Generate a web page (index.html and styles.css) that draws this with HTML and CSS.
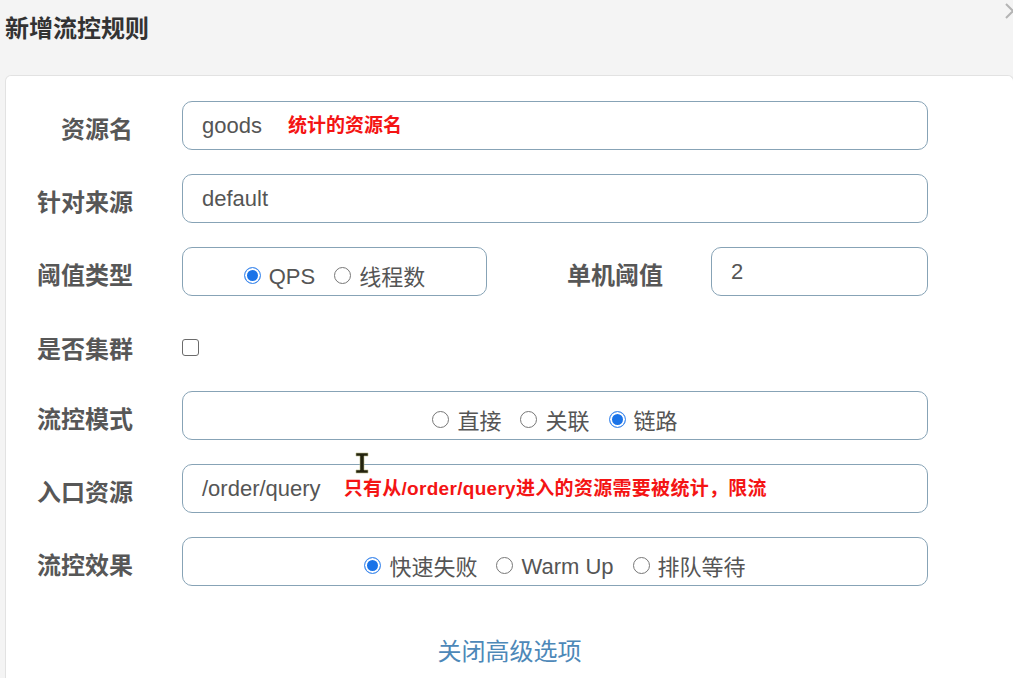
FILE: index.html
```html
<!DOCTYPE html>
<html lang="zh-CN">
<head>
<meta charset="utf-8">
<title>新增流控规则</title>
<link rel="stylesheet" href="styles.css">
</head>
<body>
<header class="modal-head">
  <h1 class="title">新增流控规则</h1>
  <svg class="close" width="16" height="16" viewBox="0 0 16 16"><path d="M1 1 L15 15 M15 1 L1 15" stroke="#b4b4b4" stroke-width="2" fill="none"/></svg>
</header>
<section class="card">
  <form class="form">
    <div class="row">
      <label class="label">资源名</label>
      <div class="field"><span class="val">goods</span><span class="note">统计的资源名</span></div>
    </div>
    <div class="row">
      <label class="label">针对来源</label>
      <div class="field"><span class="val">default</span></div>
    </div>
    <div class="row">
      <label class="label">阈值类型</label>
      <div class="field radio-box narrow">
        <span class="opt"><span class="radio on"></span><span class="lat">QPS</span></span>
        <span class="opt"><span class="radio"></span>线程数</span>
      </div>
      <label class="label label2">单机阈值</label>
      <div class="field num"><span class="val">2</span></div>
    </div>
    <div class="row row-check">
      <label class="label">是否集群</label>
      <span class="check"></span>
    </div>
    <div class="row">
      <label class="label">流控模式</label>
      <div class="field radio-box">
        <span class="opt"><span class="radio"></span>直接</span>
        <span class="opt"><span class="radio"></span>关联</span>
        <span class="opt"><span class="radio on"></span>链路</span>
      </div>
    </div>
    <div class="row">
      <label class="label">入口资源</label>
      <div class="field"><span class="val">/order/query</span><span class="note note-long">只有从/order/query进入的资源需要被统计，限流</span></div>
    </div>
    <div class="row">
      <label class="label">流控效果</label>
      <div class="field radio-box">
        <span class="opt"><span class="radio on"></span>快速失败</span>
        <span class="opt"><span class="radio"></span><span class="lat">Warm Up</span></span>
        <span class="opt"><span class="radio"></span>排队等待</span>
      </div>
    </div>
  </form>
  <a class="toggle">关闭高级选项</a>
  <svg class="cursor" width="14" height="22" viewBox="0 0 14 22"><path d="M1 1 H13 V4 H9 V18 H13 V21 H1 V18 H5 V4 H1 Z" fill="#23230f" stroke="#b9b98a" stroke-width="0.6"/></svg>
</section>
</body>
</html>
```

FILE: styles.css
```css
html, body {
  margin: 0;
  height: 100%;
}
body {
  background: #f4f4f4;
  overflow: hidden;
  font-family: "Liberation Sans", "Noto Sans CJK SC", sans-serif;
}
.modal-head {
  position: relative;
  height: 75px;
  box-sizing: border-box;
  padding-left: 5px;
}
.title {
  margin: 0;
  padding-top: 11px;
  font: 700 24px/32px "Noto Sans CJK SC", sans-serif;
  color: #333;
}
.close {
  position: absolute;
  left: 1005px;
  top: 3px;
}
.card {
  position: relative;
  margin-left: 5px;
  width: 1009px;
  height: 603px;
  box-sizing: border-box;
  background: #fff;
  border: 1px solid #e2e2e2;
  border-bottom: none;
  border-radius: 6px 6px 0 0;
  padding-top: 25px;
}
.form {
  width: 922px;
  display: flex;
  flex-direction: column;
  gap: 24px;
  margin: 0;
}
.row {
  display: flex;
  align-items: center;
  height: 49px;
}
.label {
  flex: none;
  width: 127px;
  box-sizing: border-box;
  padding-top: 5px;
  text-align: right;
  font: 700 24px/32px "Noto Sans CJK SC", sans-serif;
  color: #575757;
}
.field {
  flex: 1;
  margin-left: 49px;
  height: 49px;
  box-sizing: border-box;
  border: 1px solid #87a3b6;
  border-radius: 10px;
  display: flex;
  align-items: center;
  padding-left: 19px;
  font-size: 22px;
  color: #555;
  background: #fff;
}
.val {
  white-space: nowrap;
}
.note {
  margin-left: 26px;
  font: 700 19px/26px "Liberation Sans", "Noto Sans CJK SC", sans-serif;
  color: #f41414;
  white-space: nowrap;
}
.note-long {
  margin-left: 23px;
  letter-spacing: 0.3px;
}
.radio-box {
  justify-content: center;
  padding: 7px 0 0;
}
.narrow {
  flex: none;
  width: 305px;
}
.label2 {
  width: 176px;
}
.num {
  margin-left: 48px;
}
.opt {
  display: flex;
  align-items: center;
  margin-right: 19px;
  white-space: nowrap;
  font-family: "Liberation Sans", "Noto Sans CJK SC", sans-serif;
  font-size: 22px;
  color: #555;
}
.opt:last-child {
  margin-right: 0;
}
.lat {
  padding-top: 4px;
}
.radio {
  width: 17px;
  height: 17px;
  box-sizing: border-box;
  border-radius: 50%;
  border: 1px solid #777;
  background: #fff;
  margin-right: 8px;
}
.radio.on {
  border: 1px solid #4a90ee;
  background: #1a73e8;
  box-shadow: inset 0 0 0 2px #fff;
}
.row-check {
  height: 47px;
  padding-top: 8px;
  box-sizing: border-box;
}
.row-check .label {
  padding-top: 0;
}
.check {
  width: 17px;
  height: 17px;
  box-sizing: border-box;
  margin-left: 49px;
  border: 1.5px solid #6b6b6b;
  border-radius: 3px;
  background: #fff;
}
.toggle {
  display: block;
  margin-top: 48px;
  text-align: center;
  font: 24px/32px "Noto Sans CJK SC", sans-serif;
  color: #4d88b8;
  cursor: pointer;
}
.cursor {
  position: absolute;
  left: 349px;
  top: 376px;
}
```
